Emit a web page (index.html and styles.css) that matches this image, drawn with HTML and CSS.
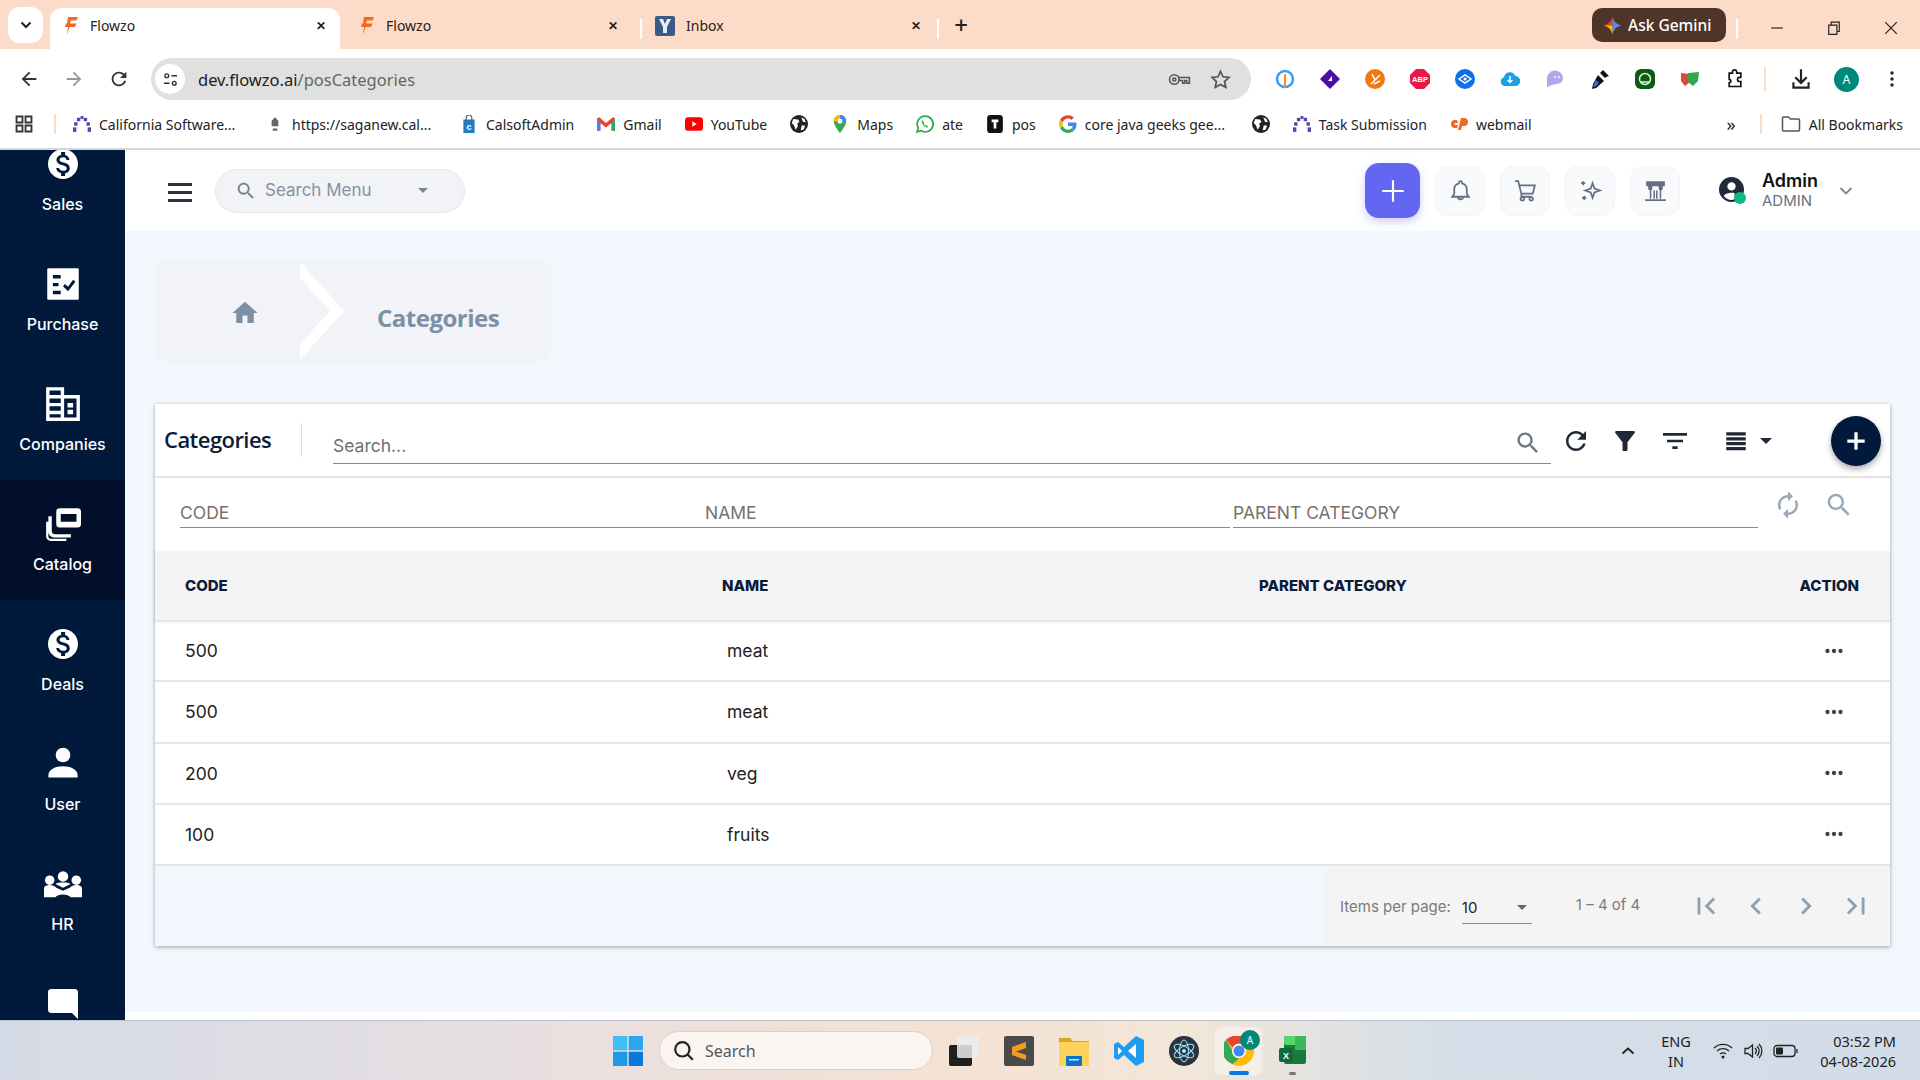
FILE: index.html
```html
<!DOCTYPE html>
<html>
<head>
    <meta charset="utf-8">
    <title>Flowzo</title>
    <link rel="stylesheet" href="styles.css">
</head>
<body>
    <svg class="sprite" width="0" height="0">
        <defs>
            <symbol id="i-search" viewBox="0 0 24 24"><path d="M15.5 14h-.79l-.28-.27C15.41 12.59 16 11.11 16 9.5 16 5.91 13.09 3 9.5 3S3 5.91 3 9.5 5.91 16 9.5 16c1.61 0 3.09-.59 4.23-1.57l.27.28v.79l5 4.99L20.49 19l-4.99-5zm-6 0C7.01 14 5 11.99 5 9.5S7.01 5 9.5 5 14 7.01 14 9.5 11.99 14 9.5 14z"/></symbol>
            <symbol id="i-home" viewBox="0 0 24 24"><path d="M10 20v-6h4v6h5v-8h3L12 3 2 12h3v8z"/></symbol>
            <symbol id="i-refresh" viewBox="0 0 24 24"><path d="M17.65 6.35C16.2 4.9 14.21 4 12 4c-4.42 0-7.99 3.58-7.99 8s3.57 8 7.99 8c3.73 0 6.84-2.55 7.73-6h-2.08c-.82 2.33-3.04 4-5.65 4-3.31 0-6-2.69-6-6s2.69-6 6-6c1.66 0 3.14.69 4.22 1.78L13 11h7V4l-2.35 2.35z"/></symbol>
            <symbol id="i-funnel" viewBox="0 0 24 24"><path d="M4.25 5.61C6.27 8.2 10 13 10 13v6c0 .55.45 1 1 1h2c.55 0 1-.45 1-1v-6s3.72-4.8 5.74-7.39C20.25 4.95 19.78 4 18.95 4H5.04c-.83 0-1.3.95-.79 1.61z"/></symbol>
            <symbol id="i-filter" viewBox="0 0 24 24"><path d="M10 18h4v-2h-4v2zM3 6v2h18V6H3zm3 7h12v-2H6v2z"/></symbol>
            <symbol id="i-rows" viewBox="0 0 24 24"><path d="M3 4h18v3H3zM3 8.5h18v3H3zM3 13h18v3H3zM3 17.5h18v3H3z"/></symbol>
            <symbol id="i-renew" viewBox="0 0 24 24"><path d="M12 6v3l4-4-4-4v3c-4.42 0-8 3.58-8 8 0 1.57.46 3.03 1.24 4.26L6.7 14.8c-.45-.83-.7-1.79-.7-2.8 0-3.31 2.69-6 6-6zm6.76 1.74L17.3 9.2c.44.84.7 1.79.7 2.8 0 3.31-2.69 6-6 6v-3l-4 4 4 4v-3c4.42 0 8-3.58 8-8 0-1.57-.46-3.03-1.24-4.26z"/></symbol>
            <symbol id="i-more" viewBox="0 0 24 24"><path d="M6 10a2 2 0 1 0 0 4 2 2 0 0 0 0-4zm12 0a2 2 0 1 0 0 4 2 2 0 0 0 0-4zm-6 0a2 2 0 1 0 0 4 2 2 0 0 0 0-4z"/></symbol>
            <symbol id="i-first" viewBox="0 0 24 24"><path d="M18.41 16.59L13.82 12l4.59-4.59L17 6l-6 6 6 6zM6 6h2v12H6z"/></symbol>
            <symbol id="i-prev" viewBox="0 0 24 24"><path d="M15.41 7.41L14 6l-6 6 6 6 1.41-1.41L10.83 12z"/></symbol>
            <symbol id="i-next" viewBox="0 0 24 24"><path d="M10 6L8.59 7.41 13.17 12l-4.58 4.59L10 18l6-6z"/></symbol>
            <symbol id="i-last" viewBox="0 0 24 24"><path d="M5.59 7.41L10.18 12l-4.59 4.59L7 18l6-6-6-6zM16 6h2v12h-2z"/></symbol>
            <symbol id="i-money" viewBox="0 0 24 24"><path d="M12 2C6.48 2 2 6.48 2 12s4.48 10 10 10 10-4.48 10-10S17.52 2 12 2zm1.41 16.09V20h-2.67v-1.93c-1.71-.36-3.16-1.46-3.27-3.4h1.96c.1 1.05.82 1.87 2.65 1.87 1.96 0 2.4-.98 2.4-1.59 0-.83-.44-1.61-2.67-2.14-2.48-.6-4.18-1.62-4.18-3.67 0-1.72 1.39-2.84 3.11-3.21V4h2.67v1.95c1.86.45 2.79 1.86 2.85 3.39H14.3c-.05-1.11-.64-1.87-2.22-1.87-1.5 0-2.4.68-2.4 1.64 0 .84.65 1.39 2.67 1.91s4.18 1.39 4.18 3.91c-.01 1.83-1.38 2.83-3.12 3.16z"/></symbol>
            <symbol id="i-globe" viewBox="0 0 16 16"><circle cx="8" cy="8" r="8" fill="#222"/><path fill="#fff" d="M3 3.5l4 .5 1.5 2-2 1.5L7 10 5 13 3.5 9 1.5 7zM10 2l3 1.5 1 3-2.500-.5zM10.500 9l3 .5-1.500 3.500-2.500.5z"/></symbol>
            <symbol id="i-arch" viewBox="0 0 16 16"><g fill="#5b3fa8"><rect x="0" y="11" width="3" height="4"/><rect x="1" y="6.5" width="3" height="3"/><rect x="3.5" y="2.5" width="3" height="3"/><rect x="9.5" y="2.5" width="3" height="3"/><rect x="12" y="6.5" width="3" height="3"/><rect x="13" y="11" width="3" height="4"/><rect x="6.7" y="1" width="2.6" height="2.5"/></g></symbol>
            <symbol id="i-flowzo" viewBox="0 0 14 18"><path fill="#f26a21" d="M3 0h10l-1.5 3.5H6L5 6.5h6.5L10 10H4.500L2 18 3 10H0l1-3.500h1z"/></symbol>
        </defs>
    </svg>

    <div class="tab-strip">
        <div class="tab-list-btn"><svg class="chev-down" viewBox="0 0 12 8"><path d="M1.5 1.5L6 6l4.5-4.5"/></svg></div>
        <div class="tab tab-active">
            <svg class="tab-fav"><use href="#i-flowzo"/></svg>
            <span class="tab-title">Flowzo</span>
            <span class="tab-close">✕</span>
        </div>
        <div class="tab">
            <svg class="tab-fav"><use href="#i-flowzo"/></svg>
            <span class="tab-title">Flowzo</span>
            <span class="tab-close">✕</span>
        </div>
        <i class="tab-sep"></i>
        <div class="tab">
            <svg class="tab-fav-y" viewBox="0 0 20 20"><rect width="20" height="20" rx="2" fill="#3a5a88"/><path d="M4 3h4l2 5 2-5h4l-4 8v6H8v-6z" fill="#e8eef6"/></svg>
            <span class="tab-title">Inbox</span>
            <span class="tab-close">✕</span>
        </div>
        <i class="tab-sep"></i>
        <span class="tab-new">+</span>
        <div class="gemini">
            <svg class="gemini-star" viewBox="0 0 20 20"><path fill="#4c8df6" d="M10 0c.6 5 4 9 10 10-5 .7-9 4-10 10z"/><path fill="#ea4335" d="M10 0C9.4 5 6 9 0 10l10 0z"/><path fill="#fbbc04" d="M0 10c5 .7 9 4 10 10V10z"/></svg>
            <span>Ask Gemini</span>
        </div>
        <i class="tab-sep gemini-sep"></i>
        <div class="win-controls">
            <svg viewBox="0 0 12 12"><path d="M1 6h10"/></svg>
            <svg viewBox="0 0 12 12"><path d="M1.5 3.5h7v8h-7zM3.5 3.5V1h7v8H8.5"/></svg>
            <svg viewBox="0 0 12 12"><path d="M1 1l10 10M11 1L1 11"/></svg>
        </div>
    </div>

    <div class="toolbar">
        <svg class="nav-icon" viewBox="0 0 24 24"><path d="M20 11H7.83l5.59-5.59L12 4l-8 8 8 8 1.41-1.41L7.83 13H20z"/></svg>
        <svg class="nav-icon nav-off" viewBox="0 0 24 24"><path d="M12 4l-1.41 1.41L16.17 11H4v2h12.17l-5.58 5.59L12 20l8-8z"/></svg>
        <svg class="nav-icon" viewBox="0 0 24 24"><path d="M17.65 6.35C16.2 4.9 14.21 4 12 4c-4.42 0-7.99 3.58-7.99 8s3.57 8 7.99 8c3.73 0 6.84-2.55 7.73-6h-2.08c-.82 2.33-3.04 4-5.65 4-3.31 0-6-2.69-6-6s2.69-6 6-6c1.66 0 3.14.69 4.22 1.78L13 11h7V4l-2.35 2.35z"/></svg>
        <div class="omnibox">
            <span class="site-info"><svg viewBox="0 0 16 16"><circle cx="4" cy="4" r="2"/><path d="M9 4h6M1 12h6"/><circle cx="12" cy="12" r="2"/></svg></span>
            <span class="url">dev.flowzo.ai<span class="url-path">/posCategories</span></span>
            <svg class="omni-key" viewBox="0 0 22 14"><circle cx="6" cy="7" r="4.5"/><circle cx="6" cy="7" r="1.5"/><path d="M10.5 5h10v5.500h-2.500V8h-2v2.500h-2V8h-3.500"/></svg>
            <svg class="omni-star" viewBox="0 0 24 24"><path d="M12 3.5l2.6 5.7 6.2.7-4.600 4.200 1.300 6.100L12 17.100l-5.500 3.100 1.300-6.100-4.600-4.200 6.200-.7z"/></svg>
        </div>
        <div class="extensions">
            <svg viewBox="0 0 20 20"><circle cx="10" cy="10" r="8" fill="none" stroke="#3b9cf0" stroke-width="2.5"/><path d="M10 5v14" stroke="#f28b3c" stroke-width="2"/></svg>
            <svg viewBox="0 0 20 20"><path d="M10 0l10 10-10 10L0 10z" fill="#4a0fa8"/><path d="M8 12l4-5v5z" fill="#fff"/></svg>
            <svg viewBox="0 0 20 20"><circle cx="10" cy="10" r="10" fill="#f07a10"/><path d="M6 15L15 6M9 15l6-3M7 5l3 6" stroke="#fff" stroke-width="1.5"/></svg>
            <svg viewBox="0 0 20 20"><path d="M6 0h8l6 6v8l-6 6H6l-6-6V6z" fill="#e8194a"/><text x="10" y="13" class="abp">ABP</text></svg>
            <svg viewBox="0 0 20 20"><circle cx="10" cy="10" r="10" fill="#0f6fe8"/><path d="M4 10l6-4 6 4-6 4z" fill="none" stroke="#fff" stroke-width="1.5"/><circle cx="10" cy="10" r="1.5" fill="#fff"/></svg>
            <svg viewBox="0 0 20 20"><path d="M5 17a4.500 4.500 0 0 1-1-8.800A6 6 0 0 1 15.500 7 5 5 0 0 1 15 17z" fill="#1aa0e8"/><path d="M10 7v6M7.500 11l2.500 2.500 2.500-2.500" stroke="#fff" stroke-width="1.5" fill="none"/></svg>
            <svg viewBox="0 0 20 20"><path d="M2 18V10a8 8 0 0 1 16-1c0 5-4 6-7 6l-4 1z" fill="#b3a6ee"/><circle cx="10" cy="8" r="1" fill="#fff"/><circle cx="14" cy="8" r="1" fill="#fff"/></svg>
            <svg viewBox="0 0 20 20"><path d="M13 1l6 6-3 1-1 1-5-5 1-1zM8 6l6 6-8 7-4 1 1-5z" fill="#111"/><path d="M6 11l3 3-4 4-2-1z" fill="#3a6fd8"/></svg>
            <svg viewBox="0 0 20 20"><rect width="20" height="20" rx="6" fill="#0c5a14"/><circle cx="10" cy="10" r="5.5" fill="none" stroke="#dff2d0" stroke-width="1.5"/><path d="M6 13h8" stroke="#dff2d0" stroke-width="1.5"/></svg>
            <svg viewBox="0 0 20 20"><path d="M1 4l9 1v8l-5 4-4-5z" fill="#d84a3a"/><path d="M8 4l11-1-1 9-5 5-5-4z" fill="#2eaa4a"/></svg>
            <svg viewBox="0 0 24 24"><path class="ext-puzzle" d="M5 5h4V3.500a2.500 2.500 0 0 1 5 0V5h5v5h-1.500a2.500 2.500 0 0 0 0 5H19v6H5v-4.500a2 2 0 0 0 0-4z"/></svg>
            <i class="toolbar-sep"></i>
            <svg class="ext-dl" viewBox="0 0 24 24"><path d="M11 3h2v10.200l3.600-3.600L18 11l-6 6-6-6 1.400-1.400 3.600 3.600zM4 15h2v4h12v-4h2v6H4z"/></svg>
            <span class="avatar">A</span>
            <svg class="ext-dots" viewBox="0 0 20 20"><circle cx="10" cy="4" r="1.7"/><circle cx="10" cy="10" r="1.7"/><circle cx="10" cy="16" r="1.7"/></svg>
        </div>
    </div>

    <div class="bookmarks">
        <svg class="bm-apps" viewBox="0 0 18 18"><path d="M1.5 1.5h6v6h-6zM10.500 1.500h6v6h-6zM1.500 10.500h6v6h-6zM10.500 10.500h6v6h-6z"/></svg>
        <i class="bm-sep"></i>
        <span class="bm bm-wide-a"><svg><use href="#i-arch"/></svg>California Software...</span>
        <span class="bm bm-wide-b"><svg viewBox="0 0 16 16"><path d="M8 2l3 3v5H5V5zM6 12h4v2H6z" fill="#666"/></svg>https://saganew.cal...</span>
        <span class="bm"><svg viewBox="0 0 16 16"><path d="M3 4h10v12H3z" fill="#1f7fc4"/><path d="M5.500 5V2.500a2.500 2.500 0 0 1 5 0V5" fill="none" stroke="#555"/><text x="8" y="13" class="bag">c</text></svg>CalsoftAdmin</span>
        <span class="bm"><svg viewBox="0 0 16 16"><path d="M0 3l2-1 6 5 6-5 2 1v11h-3V7L8 11 3 7v7H0z" fill="#ea4335"/><path d="M0 3v11h3V7z" fill="#4285f4"/><path d="M16 3v11h-3V7z" fill="#34a853"/></svg>Gmail</span>
        <span class="bm"><svg viewBox="0 0 16 16"><rect x="0" y="2" width="16" height="12" rx="3" fill="#f00"/><path d="M6.500 5.500l4 2.500-4 2.500z" fill="#fff"/></svg>YouTube</span>
        <span class="bm"><svg><use href="#i-globe"/></svg></span>
        <span class="bm"><svg viewBox="0 0 16 16"><path d="M8 0a5.500 5.500 0 0 1 5.500 5.500C13.500 9.500 8 16 8 16S2.500 9.500 2.500 5.500A5.500 5.500 0 0 1 8 0z" fill="#34a853"/><path d="M8 0a5.500 5.500 0 0 1 5.500 5.500L8 5.500z" fill="#4285f4"/><path d="M2.500 5.500A5.500 5.500 0 0 1 8 0v5.500z" fill="#fbbc04"/><circle cx="8" cy="5.500" r="2.200" fill="#fff"/></svg>Maps</span>
        <span class="bm"><svg viewBox="0 0 16 16"><path d="M8 1a7 7 0 0 0-6 10.500L1 15l3.600-1A7 7 0 1 0 8 1z" fill="#fff" stroke="#25b04b" stroke-width="1.600"/><path d="M5.500 4.500c-1 1.500 0 3.500 1.500 5s3 2 4 1.200l-1.500-1.700-1 .5L6.800 7.800l.5-1z" fill="#25b04b"/></svg>ate</span>
        <span class="bm"><svg viewBox="0 0 16 16"><rect x="1" y="0" width="14" height="16" rx="3" fill="#111"/><path d="M5 4h6v2.500H9.200V12H6.800V6.500H5z" fill="#fff"/></svg>pos</span>
        <span class="bm bm-wide-c"><svg viewBox="0 0 16 16"><path d="M15.500 8.200c0-.6 0-1-.1-1.500H8v3h4.300c-.2 1-.7 1.800-1.600 2.400l2.500 1.900c1.500-1.300 2.300-3.300 2.300-5.800z" fill="#4285f4"/><path d="M8 16c2.100 0 3.900-.7 5.200-1.900l-2.500-1.900c-.7.500-1.600.8-2.700.8-2.100 0-3.800-1.400-4.500-3.300L.9 11.600C2.200 14.200 4.900 16 8 16z" fill="#34a853"/><path d="M3.500 9.700A4.800 4.800 0 0 1 3.500 6.300L.9 4.400a8 8 0 0 0 0 7.200z" fill="#fbbc04"/><path d="M8 3.200c1.200 0 2.200.4 3 1.200l2.200-2.200A8 8 0 0 0 .9 4.400l2.600 1.900C4.200 4.500 5.900 3.200 8 3.200z" fill="#ea4335"/></svg>core java geeks gee...</span>
        <span class="bm"><svg><use href="#i-globe"/></svg></span>
        <span class="bm"><svg><use href="#i-arch"/></svg>Task Submission</span>
        <span class="bm"><svg viewBox="0 0 18 16"><path d="M7 4H5a4 4 0 0 0 0 8h2l1-3H5.500a1 1 0 0 1 0-2H8zM9 2h5a3.500 3.500 0 0 1 0 8h-2l-1 4H8l3-12z" fill="#f26a21"/></svg>webmail</span>
        <span class="bm-more">»</span>
        <i class="bm-sep bm-sep-end"></i>
        <span class="bm bm-all"><svg viewBox="0 0 20 18"><path d="M1.500 3a1 1 0 0 1 1-1h5l2 2h8a1 1 0 0 1 1 1v10a1 1 0 0 1-1 1h-15a1 1 0 0 1-1-1z"/></svg>All Bookmarks</span>
    </div>

    <div class="app">
        <aside class="sidebar">
            <nav class="side-list">
                <a class="side-item">
                    <svg class="side-icon" viewBox="0 0 24 24"><use href="#i-money"/></svg>
                    <span>Sales</span>
                </a>
                <a class="side-item">
                    <svg class="side-icon" viewBox="0 0 32 32"><path fill-rule="evenodd" d="M3 2h26a1 1 0 0 1 1 1v26a1 1 0 0 1-1 1H3a1 1 0 0 1-1-1V3a1 1 0 0 1 1-1zm4 6v3h7V8zm0 7v3h5v-3zm0 7v3h7v-3zm9-4l4.500 4.500L27 14l-2-1.800-4.500 6.300-2.800-2.500z"/></svg>
                    <span>Purchase</span>
                </a>
                <a class="side-item">
                    <svg class="side-icon" viewBox="0 0 32 32"><path fill-rule="evenodd" d="M1 1h16v7h14v23H1zm3 3v4h10V4zm0 7v4h10v-4zm0 7v4h10v-4zm0 7v3h10v-3zM17 11v17h11V11zm3 4h5v4h-5zm0 6h5v4h-5z"/></svg>
                    <span>Companies</span>
                </a>
                <a class="side-item side-item-active">
                    <svg class="side-icon" viewBox="0 0 32 32"><path fill-rule="evenodd" d="M13 2h16a3 3 0 0 1 3 3v11a3 3 0 0 1-3 3H13a3 3 0 0 1-3-3V5a3 3 0 0 1 3-3zm1 5v7h14V7zM6 9v13a3 3 0 0 0 3 3h14v3H8a5 5 0 0 1-5-5V9zM1 14v13a4 4 0 0 0 4 4h14v-2H5a2 2 0 0 1-2-2V14z"/></svg>
                    <span>Catalog</span>
                </a>
                <a class="side-item">
                    <svg class="side-icon" viewBox="0 0 24 24"><use href="#i-money"/></svg>
                    <span>Deals</span>
                </a>
                <a class="side-item">
                    <svg class="side-icon" viewBox="0 0 32 32"><circle cx="16" cy="8" r="6.500"/><path d="M3 28v-2c0-5 6-8 13-8s13 3 13 8v2z"/></svg>
                    <span>User</span>
                </a>
                <a class="side-item">
                    <svg class="side-icon side-icon-hr" viewBox="0 0 40 28"><circle cx="20" cy="6" r="5.500"/><circle cx="6" cy="10" r="5"/><circle cx="34" cy="10" r="5"/><path d="M0 28V19c0-3 3-4 6-4 3 0 5 1 7 3l7 3 7-3c2-2 4-3 7-3 3 0 6 1 6 4v9H28c-3-4-13-4-16 0z"/><path d="M12 14c3-2 13-2 16 0l-8 4z"/></svg>
                    <span>HR</span>
                </a>
                <a class="side-item">
                    <svg class="side-icon" viewBox="0 0 24 24"><path d="M21.99 4c0-1.1-.89-2-1.99-2H4c-1.1 0-2 .9-2 2v12c0 1.100.9 2 2 2h14l4 4-.01-18z"/></svg>
                </a>
            </nav>
        </aside>

        <div class="main">
            <header class="topbar">
                <div class="hamburger"><i></i><i></i><i></i></div>
                <div class="menu-search">
                    <svg class="ms-icon"><use href="#i-search"/></svg>
                    <span class="ms-text">Search Menu</span>
                    <i class="caret ms-caret"></i>
                </div>
                <div class="topbar-right">
                    <div class="add-btn"><svg viewBox="0 0 24 24"><path d="M11 2h2v9h9v2h-9v9h-2v-9H2v-2h9z"/></svg></div>
                    <div class="tb-btn"><svg viewBox="0 0 24 24"><path d="M12 3a1.500 1.500 0 0 1 1.500 1.500v.6A6 6 0 0 1 18 11v4l2 3H4l2-3v-4a6 6 0 0 1 4.500-5.900v-.6A1.500 1.500 0 0 1 12 3zM9.500 18a2.500 2.500 0 0 0 5 0"/></svg></div>
                    <div class="tb-btn"><svg viewBox="0 0 24 24"><path d="M2 3h3l3 12h11l2-8H6M8 15v2a1 1 0 0 0 1 1h9"/><circle cx="9" cy="20" r="1.7"/><circle cx="17.500" cy="20" r="1.7"/></svg></div>
                    <div class="tb-btn"><svg viewBox="0 0 24 24"><path d="M14 5l1.800 5.200L21 12l-5.200 1.800L14 19l-1.800-5.200L7 12l5.200-1.800zM5 3v4M3 5h4M6 17v4M4 19h4"/></svg></div>
                    <div class="tb-btn"><svg class="tb-bank" viewBox="0 0 24 24"><path d="M3 3h18v5H3zM5 8v2a2 2 0 0 0 4 0V8zM15 8v2a2 2 0 0 0 4 0V8zM10 12h1.500v8H10zM6.500 12H8v8H6.500zM12.500 12H14v8h-1.500zM16 12h1.500v8H16zM2 20.500h20V22H2z"/></svg></div>
                    <div class="user-box">
                        <div class="user-pic">
                            <svg viewBox="0 0 24 24"><path d="M12 0a12 12 0 1 0 0 24 12 12 0 0 0 0-24zm0 5a4 4 0 1 1 0 8 4 4 0 0 1 0-8zm0 17c-3 0-6-1.500-7.500-4 1-2 5-3 7.500-3 1 0 2 .1 3 .4V21c-1 .7-2 1-3 1z"/></svg>
                            <i class="user-dot"></i>
                        </div>
                        <div class="user-text">
                            <div class="user-name">Admin</div>
                            <div class="user-role">ADMIN</div>
                        </div>
                        <svg class="user-chev" viewBox="0 0 14 10"><path d="M1.500 2l5.500 5.500L12.500 2"/></svg>
                    </div>
                </div>
            </header>

            <div class="content">
                <div class="crumbs">
                    <div class="crumb-home"><svg><use href="#i-home"/></svg></div>
                    <svg class="crumb-arrow" viewBox="0 0 50 102"><path d="M0 2l44 49L0 100V84l30-33L0 18z"/></svg>
                    <div class="crumb-title">Categories</div>
                </div>

                <section class="card">
                    <div class="card-head">
                        <h2 class="card-title">Categories</h2>
                        <div class="card-search">
                            <span class="cs-text">Search...</span>
                            <svg class="cs-icon"><use href="#i-search"/></svg>
                        </div>
                        <div class="card-tools">
                            <svg class="tool-refresh"><use href="#i-refresh"/></svg>
                            <svg class="tool-funnel"><use href="#i-funnel"/></svg>
                            <svg class="tool-filter"><use href="#i-filter"/></svg>
                            <svg class="tool-rows"><use href="#i-rows"/></svg>
                            <i class="caret tool-caret"></i>
                        </div>
                        <div class="fab"><svg viewBox="0 0 24 24"><path d="M10.500 4h3v6.500H20v3h-6.500V20h-3v-6.500H4v-3h6.500z"/></svg></div>
                    </div>

                    <div class="filter-row">
                        <div class="filter-field">CODE</div>
                        <div class="filter-field">NAME</div>
                        <div class="filter-field">PARENT CATEGORY</div>
                        <div class="filter-actions">
                            <svg><use href="#i-renew"/></svg>
                            <svg><use href="#i-search"/></svg>
                        </div>
                    </div>

                    <div class="t-head t-grid">
                        <div>CODE</div>
                        <div>NAME</div>
                        <div>PARENT CATEGORY</div>
                        <div class="t-action">ACTION</div>
                    </div>
                    <div class="t-row t-grid">
                        <div>500</div><div class="t-name">meat</div><div></div>
                        <div class="t-action"><svg class="t-more"><use href="#i-more"/></svg></div>
                    </div>
                    <div class="t-row t-grid">
                        <div>500</div><div class="t-name">meat</div><div></div>
                        <div class="t-action"><svg class="t-more"><use href="#i-more"/></svg></div>
                    </div>
                    <div class="t-row t-grid">
                        <div>200</div><div class="t-name">veg</div><div></div>
                        <div class="t-action"><svg class="t-more"><use href="#i-more"/></svg></div>
                    </div>
                    <div class="t-row t-grid">
                        <div>100</div><div class="t-name">fruits</div><div></div>
                        <div class="t-action"><svg class="t-more"><use href="#i-more"/></svg></div>
                    </div>

                    <div class="card-foot">
                        <div class="pager">
                            <span class="pg-label">Items per page:</span>
                            <div class="pg-select"><span>10</span><i class="caret pg-caret"></i></div>
                            <span class="pg-range">1 – 4 of 4</span>
                            <div class="pg-btns">
                                <svg><use href="#i-first"/></svg>
                                <svg><use href="#i-prev"/></svg>
                                <svg><use href="#i-next"/></svg>
                                <svg><use href="#i-last"/></svg>
                            </div>
                        </div>
                    </div>
                </section>
            </div>
            <div class="main-strip"></div>
        </div>
    </div>

    <footer class="taskbar">
        <svg class="tk-win" viewBox="0 0 30 30"><rect width="14.300" height="14.300" x="0" y="0" fill="#3fc0f5"/><rect width="14.300" height="14.300" x="15.700" y="0" fill="#2aa8ee"/><rect width="14.300" height="14.300" x="0" y="15.700" fill="#1b9ae8"/><rect width="14.300" height="14.300" x="15.700" y="15.700" fill="#0a78d8"/></svg>
        <div class="tk-search">
            <svg viewBox="0 0 20 20"><circle cx="8.500" cy="8.500" r="6.500"/><path d="M13 13l5 5"/></svg>
            <span>Search</span>
        </div>
        <svg class="tk-app" viewBox="0 0 30 30"><rect x="0" y="9" width="23" height="21" rx="2" fill="#1f1f1f"/><rect x="8" y="0" width="22" height="22" rx="2" fill="#ececec" opacity=".85"/></svg>
        <svg class="tk-app" viewBox="0 0 30 30"><rect width="30" height="30" rx="2" fill="#4a4a4a"/><path d="M8 11l14-5v6L8 17zM8 14l14 5v5L8 19z" fill="#f79b1f"/></svg>
        <svg class="tk-app" viewBox="0 0 30 30"><path d="M0 2h11l3 3h16v25H0z" fill="#e0a31c"/><rect y="6" width="30" height="24" fill="#fbd35a"/><rect x="7" y="20" width="16" height="10" rx="1" fill="#0c74c8"/><rect x="10" y="23" width="10" height="1.500" fill="#bfe2ff"/></svg>
        <svg class="tk-app" viewBox="0 0 30 30"><path d="M22 0l8 4v22l-8 4-12-11-6 5-4-2V8l4-2 6 5z" fill="#1f9cf0"/><path d="M22 8l-8 7 8 7z" fill="#fff"/><path d="M4 11v8l4-4z" fill="#fff"/></svg>
        <svg class="tk-app" viewBox="0 0 30 30"><circle cx="15" cy="15" r="15" fill="#2b3240"/><g fill="none" stroke="#9feaf9" stroke-width="1"><ellipse cx="15" cy="15" rx="11" ry="4.500" transform="rotate(30 15 15)"/><ellipse cx="15" cy="15" rx="11" ry="4.500" transform="rotate(90 15 15)"/><ellipse cx="15" cy="15" rx="11" ry="4.500" transform="rotate(150 15 15)"/></g><circle cx="15" cy="15" r="2" fill="#9feaf9"/></svg>
        <div class="tk-chrome">
            <svg viewBox="0 0 30 30"><circle cx="15" cy="15" r="15" fill="#fbbc04"/><path d="M15 0a15 15 0 0 1 13 7.500H15a7.500 7.500 0 0 0-6.500 3.750L2 3.800A15 15 0 0 1 15 0z" fill="#ea4335"/><path d="M2 3.800l6.500 11.200A7.500 7.500 0 0 0 15 22.500L8.500 28A15 15 0 0 1 2 3.800z" fill="#34a853"/><circle cx="15" cy="15" r="7" fill="#fff"/><circle cx="15" cy="15" r="5.500" fill="#4285f4"/></svg>
            <span class="tk-badge">A</span>
            <i class="tk-active"></i>
        </div>
        <div class="tk-excel">
            <svg viewBox="0 0 27 30"><rect x="5" y="0" width="22" height="28" rx="2" fill="#1a7a3e"/><rect x="5" y="0" width="22" height="9" rx="2" fill="#55d668"/><rect x="16" y="0" width="11" height="14" rx="1" fill="#3bb85a"/><rect x="0" y="12" width="14" height="14" rx="2" fill="#0f6b3a"/><text x="7" y="23" class="xl">X</text></svg>
            <i class="tk-open"></i>
        </div>
        <div class="tray">
            <svg class="tray-up" viewBox="0 0 14 8"><path d="M1.500 6.500L7 1.500l5.500 5"/></svg>
            <div class="tray-lang"><div>ENG</div><div>IN</div></div>
            <svg class="tray-icon" viewBox="0 0 20 18"><path class="tray-line" d="M1 6a13 13 0 0 1 18 0M4 9a9 9 0 0 1 12 0M7 12a5 5 0 0 1 6 0"/><circle cx="10" cy="15" r="1.500"/></svg>
            <svg class="tray-icon" viewBox="0 0 20 18"><path class="tray-line" d="M2 6.500h3L9.500 3v12L5 11.500H2zM12 6a4 4 0 0 1 0 6M14 4a7 7 0 0 1 0 10M16 2a10 10 0 0 1 0 14"/></svg>
            <svg class="tray-batt" viewBox="0 0 26 14"><rect x="1" y="1.500" width="21" height="11" rx="3" class="tray-line"/><rect x="3" y="3.500" width="7" height="7" rx="1"/><path d="M24 5v4" class="tray-line"/></svg>
            <div class="tray-clock"><div>03:52 PM</div><div>04-08-2026</div></div>
        </div>
    </footer>
</body>
</html>
```

FILE: styles.css
```css
* {
    box-sizing: border-box;
}
body {
    margin: 0;
    width: 1920px;
    height: 1080px;
    overflow: hidden;
    display: flex;
    flex-direction: column;
    font-family: "Inter", "Liberation Sans", sans-serif;
    background: #fff;
    color: #111;
}
.sprite {
    display: block;
    height: 0;
}
i {
    display: block;
}
.caret {
    width: 0;
    height: 0;
    border-left: 5px solid transparent;
    border-right: 5px solid transparent;
    border-top: 5px solid #757575;
}

/* browser tabs */
.tab-strip {
    height: 49px;
    flex: none;
    display: flex;
    align-items: flex-end;
    background: #fddbc9;
    padding-left: 8px;
    font-family: "Noto Sans", sans-serif;
}
.tab-list-btn {
    width: 35px;
    height: 36px;
    margin-bottom: 6px;
    margin-right: 7px;
    border-radius: 12px;
    background: #fff;
    display: flex;
    align-items: center;
    justify-content: center;
}
.chev-down {
    width: 12px;
    height: 8px;
    fill: none;
    stroke: #222;
    stroke-width: 2;
}
.tab {
    width: 290px;
    height: 41px;
    display: flex;
    align-items: center;
    padding: 0 14px 6px 15px;
    font-size: 14px;
    color: #2b2118;
}
.tab-active {
    background: #fff;
    border-radius: 12px 12px 0 0;
}
.tab-active + .tab {
    width: 300px;
    padding-left: 21px;
    padding-right: 22px;
}
.tab-fav {
    width: 14px;
    height: 18px;
    flex: none;
    margin-right: 11px;
}
.tab-fav-y {
    width: 20px;
    height: 20px;
    flex: none;
    margin-right: 11px;
}
.tab-title {
    flex: 1;
}
.tab-close {
    font-size: 12px;
    font-weight: 700;
    color: #222;
}
.tab-sep {
    width: 2px;
    height: 20px;
    margin-bottom: 10px;
    background: #fff;
}
.tab-sep + .tab {
    width: 295px;
    padding-left: 13px;
    padding-right: 16px;
}
.tab-new {
    width: 44px;
    height: 41px;
    text-align: center;
    font-size: 24px;
    line-height: 34px;
    font-weight: 500;
    color: #222;
}
.gemini {
    margin-left: 609px;
    margin-bottom: 7px;
    width: 134px;
    height: 34px;
    border-radius: 10px;
    background: #4f3527;
    color: #fff;
    display: flex;
    align-items: center;
    padding-left: 11px;
    font-size: 15.5px;
    font-weight: 500;
    white-space: nowrap;
}
.gemini-star {
    width: 19px;
    height: 19px;
    margin-right: 6px;
    flex: none;
}
.gemini-sep {
    margin-left: 10px;
}
.win-controls {
    margin-left: 32px;
    margin-bottom: 14px;
    display: flex;
    gap: 43px;
}
.win-controls svg {
    width: 14px;
    height: 14px;
    fill: none;
    stroke: #222;
    stroke-width: 1;
}

/* browser toolbar */
.toolbar {
    height: 51px;
    flex: none;
    display: flex;
    align-items: center;
    padding: 9px 0 0 18px;
}
.nav-icon {
    width: 22px;
    height: 22px;
    margin-right: 23px;
    flex: none;
    fill: #333;
}
.nav-off {
    fill: #9a9a9a;
}
.omnibox {
    width: 1100px;
    height: 42px;
    margin-left: -2px;
    border-radius: 21px;
    background: #e0e0e0;
    display: flex;
    align-items: center;
    padding: 0 19px 0 4px;
}
.site-info {
    width: 30px;
    height: 30px;
    border-radius: 50%;
    background: #fff;
    display: flex;
    align-items: center;
    justify-content: center;
}
.site-info svg {
    width: 15px;
    height: 15px;
    fill: none;
    stroke: #333;
    stroke-width: 1.5;
}
.url {
    flex: 1;
    margin-left: 13px;
    font-family: "Noto Sans", sans-serif;
    font-size: 16.5px;
    color: #222;
}
.url-path {
    color: #666;
}
.omni-key {
    width: 23px;
    height: 15px;
    fill: none;
    stroke: #555;
    stroke-width: 1.5;
    margin-right: 18px;
}
.omni-star {
    width: 23px;
    height: 23px;
    fill: none;
    stroke: #555;
    stroke-width: 1.8;
}
.extensions {
    display: flex;
    align-items: center;
    margin-left: 24px;
    gap: 25px;
}
.extensions svg {
    width: 20px;
    height: 20px;
    flex: none;
}
.abp {
    font: 700 7.5px "Liberation Sans", sans-serif;
    fill: #fff;
    text-anchor: middle;
}
.bag {
    font: 700 8px "Liberation Sans", sans-serif;
    fill: #fff;
    text-anchor: middle;
}
.ext-puzzle {
    fill: none;
    stroke: #111;
    stroke-width: 2;
}
.toolbar-sep {
    width: 2px;
    height: 24px;
    background: #fddbc9;
    margin: 0 -6px;
}
.extensions .ext-dl {
    width: 26px;
    height: 26px;
    fill: #222;
    margin-left: 3px;
}
.avatar {
    width: 25px;
    height: 25px;
    margin-left: -5px;
    border-radius: 50%;
    background: #00897b;
    color: #fff;
    font-size: 12px;
    display: flex;
    align-items: center;
    justify-content: center;
    flex: none;
}
.extensions .ext-dots {
    margin-left: -2px;
    fill: #222;
}

/* bookmarks */
.bookmarks {
    height: 50px;
    flex: none;
    display: flex;
    align-items: center;
    padding-left: 15px;
    border-bottom: 2px solid #d6d6d6;
    font-family: "Noto Sans", sans-serif;
    font-size: 14px;
    color: #222;
    white-space: nowrap;
    gap: 23px;
}
.bm-apps {
    width: 18px;
    height: 18px;
    fill: none;
    stroke: #333;
    stroke-width: 1.8;
    flex: none;
}
.bm-sep {
    width: 2px;
    height: 20px;
    background: #fddbc9;
    margin: 0 -6px 0 -2px;
}
.bm {
    display: flex;
    align-items: center;
    gap: 8px;
}
.bm svg {
    width: 18px;
    height: 18px;
    flex: none;
}
.bm-wide-a {
    width: 170px;
}
.bm-wide-b {
    width: 171px;
}
.bm-wide-c {
    width: 170px;
}
.bm-more {
    margin-left: 172px;
    font-size: 18px;
    line-height: 18px;
}
.bm-sep-end {
    margin: 0 -4px 0 1px;
}
.bm-all svg {
    width: 20px;
    height: 18px;
    fill: none;
    stroke: #555;
    stroke-width: 1.5;
}

/* app frame */
.app {
    flex: 1;
    min-height: 0;
    display: flex;
}
.sidebar {
    width: 125px;
    flex: none;
    overflow: hidden;
    background: #01193a;
    color: #fff;
}
.side-list {
    margin-top: -30px;
}
.side-item {
    height: 120px;
    display: flex;
    flex-direction: column;
    align-items: center;
    padding-top: 26px;
    font-size: 16px;
    font-weight: 500;
}
.side-item-active {
    background: #010f2a;
}
.side-icon {
    width: 36px;
    height: 36px;
    margin-bottom: 12px;
    fill: #fff;
}
.side-icon-hr {
    width: 38px;
}

.main {
    flex: 1;
    min-width: 0;
    display: flex;
    flex-direction: column;
    background: #fff;
}
.topbar {
    height: 81px;
    flex: none;
    display: flex;
    align-items: center;
    padding-left: 43px;
}
.hamburger {
    width: 24px;
    margin-top: 3px;
    display: flex;
    flex-direction: column;
    gap: 5px;
}
.hamburger i {
    height: 3px;
    background: #2b3240;
}
.menu-search {
    width: 250px;
    height: 44px;
    margin-left: 23px;
    border-radius: 22px;
    border: 1px solid #e6e9f0;
    background: #f1f3f7;
    display: flex;
    align-items: center;
    padding-left: 19px;
}
.ms-icon {
    width: 22px;
    height: 22px;
    fill: #77818f;
    flex: none;
}
.ms-text {
    margin-left: 8px;
    margin-bottom: 2px;
    font-size: 17px;
    color: #8690a0;
    width: 153px;
    flex: none;
}
.ms-caret {
    border-top-color: #7b8798;
}
.topbar-right {
    margin-left: auto;
    display: flex;
    align-items: center;
    gap: 15px;
    padding-right: 67px;
}
.add-btn {
    width: 55px;
    height: 55px;
    border-radius: 14px;
    background: #6366f1;
    box-shadow: 0 4px 10px rgba(99, 102, 241, 0.3);
    display: flex;
    align-items: center;
    justify-content: center;
}
.add-btn svg {
    width: 26px;
    height: 26px;
    fill: #fff;
}
.tb-btn {
    width: 50px;
    height: 50px;
    border-radius: 13px;
    background: #f8fafc;
    border: 1px solid #f1f5f9;
    display: flex;
    align-items: center;
    justify-content: center;
}
.tb-btn svg {
    width: 25px;
    height: 25px;
    fill: none;
    stroke: #667085;
    stroke-width: 1.7;
}
.tb-btn .tb-bank {
    fill: #667085;
    stroke: none;
}
.user-box {
    display: flex;
    align-items: center;
    margin-left: 24px;
}
.user-pic {
    width: 27px;
    height: 27px;
    position: relative;
}
.user-pic svg {
    width: 25px;
    height: 25px;
    fill: #1f2937;
    display: block;
}
.user-dot {
    position: absolute;
    right: 0;
    bottom: 0;
    width: 12px;
    height: 12px;
    border-radius: 50%;
    background: #10b981;
}
.user-text {
    margin-left: 16px;
    width: 77px;
}
.user-name {
    font-size: 18px;
    font-weight: 600;
    line-height: 21px;
    color: #111;
}
.user-role {
    font-size: 15px;
    line-height: 20px;
    color: #6b7280;
}
.user-chev {
    width: 14px;
    height: 10px;
    fill: none;
    stroke: #7b8798;
    stroke-width: 1.8;
}

/* page content */
.content {
    flex: 1;
    min-height: 0;
    background: #f2f6fd;
    padding: 29px 30px 0;
}
.main-strip {
    height: 8px;
    flex: none;
}
.crumbs {
    width: 397px;
    height: 102px;
    border-radius: 14px;
    background: #f1f3f8;
    display: flex;
    align-items: center;
}
.crumb-home {
    width: 145px;
    padding-left: 75px;
    padding-top: 4px;
}
.crumb-home svg {
    width: 30px;
    height: 30px;
    fill: #7b8fa6;
    display: block;
}
.crumb-arrow {
    width: 50px;
    height: 102px;
    fill: #fff;
    flex: none;
}
.crumb-title {
    margin-left: 27px;
    margin-top: 12px;
    font-family: "Open Sans", sans-serif;
    font-size: 24px;
    font-weight: 700;
    letter-spacing: -0.5px;
    color: #7b8fa6;
}

.card {
    margin-top: 42px;
    width: 1735px;
    height: 542px;
    background: #fff;
    box-shadow: 0 1px 4px rgba(0, 0, 0, 0.35);
    display: flex;
    flex-direction: column;
}
.card-head {
    height: 74px;
    flex: none;
    display: flex;
    align-items: center;
    border-bottom: 2px solid #e2e2e2;
    padding-left: 9px;
}
.card-title {
    margin: 0 31px 0 0;
    width: 138px;
    height: 34px;
    border-right: 1px solid #ddd;
    font-family: "Open Sans", sans-serif;
    font-size: 22px;
    line-height: 32px;
    font-weight: 600;
    letter-spacing: -0.55px;
    color: #0b1b3a;
}
.card-search {
    width: 1218px;
    height: 36px;
    margin-top: 12px;
    border-bottom: 1px solid #8a8a8a;
    display: flex;
    align-items: center;
    justify-content: space-between;
    padding-right: 9px;
}
.cs-text {
    font-size: 17.5px;
    color: #6f6f6f;
}
.cs-icon {
    width: 28px;
    height: 28px;
    margin-top: -6px;
    fill: #6f7780;
}
.card-tools {
    display: flex;
    align-items: center;
    margin-left: 10px;
    margin-top: 1px;
}
.card-tools svg {
    fill: #1f2937;
    flex: none;
}
.tool-refresh {
    width: 30px;
    height: 30px;
}
.tool-funnel {
    width: 30px;
    height: 30px;
    margin-left: 19px;
}
.tool-filter {
    width: 32px;
    height: 32px;
    margin-left: 19px;
}
.tool-rows {
    width: 26px;
    height: 26px;
    margin-left: 32px;
}
.tool-caret {
    margin-left: 11px;
    border-left-width: 6px;
    border-right-width: 6px;
    border-top: 6px solid #1f2937;
}
.fab {
    width: 50px;
    height: 50px;
    margin-left: 59px;
    margin-top: 2px;
    border-radius: 50%;
    background: #01193a;
    box-shadow: 0 3px 6px rgba(0, 0, 0, 0.35);
    display: flex;
    align-items: center;
    justify-content: center;
    flex: none;
}
.fab svg {
    width: 26px;
    height: 26px;
    fill: #fff;
}

.filter-row {
    height: 73px;
    flex: none;
    display: flex;
    padding-left: 25px;
}
.filter-field {
    width: 525px;
    height: 50px;
    border-bottom: 1px solid #8a8a8a;
    padding-top: 24px;
    font-size: 17.5px;
    line-height: 22px;
    color: #77716b;
}
.filter-field:nth-child(2) {
    margin-right: 3px;
}
.filter-actions {
    display: flex;
    gap: 21px;
    margin-left: 15px;
    padding-top: 12px;
}
.filter-actions svg {
    width: 30px;
    height: 30px;
    fill: #9aa8ba;
}

.t-grid {
    display: grid;
    grid-template-columns: 537px 537px 1fr 120px;
    padding: 0 31px 0 30px;
    align-items: center;
}
.t-head {
    height: 70px;
    flex: none;
    background: #f4f4f4;
    border-bottom: 1px solid #e2e2e2;
    box-shadow: 0 1px 2px rgba(0, 0, 0, 0.12);
    font-size: 15px;
    font-weight: 800;
    color: #0b1b3a;
}
.t-row {
    height: 61.25px;
    flex: none;
    border-bottom: 2px solid #e6e6e6;
    font-size: 17.5px;
    color: #222;
}
.t-name {
    padding-left: 5px;
}
.t-action {
    text-align: right;
}
.t-more {
    display: block;
    margin-left: auto;
    margin-right: 12px;
    width: 26px;
    height: 26px;
    fill: #3a4250;
}
.card-foot {
    flex: 1;
    min-height: 0;
    background: #f2f6fd;
    display: flex;
    justify-content: flex-end;
}
.pager {
    width: 565px;
    background: #f4f4f4;
    display: flex;
    align-items: center;
    padding-left: 15px;
    font-size: 15px;
    color: #7a7a7a;
}
.pg-select {
    width: 70px;
    height: 32px;
    margin-left: 11px;
    margin-top: 3px;
    border-bottom: 1px solid #8a8a8a;
    display: flex;
    align-items: center;
    justify-content: space-between;
    padding-right: 5px;
    color: #222;
}
.pg-caret {
    border-top-color: #666;
}
.pg-range {
    margin-left: 44px;
    margin-top: -4px;
}
.pg-btns {
    display: flex;
    gap: 16px;
    margin-left: 49px;
}
.pg-btns svg {
    width: 34px;
    height: 34px;
    fill: #8fa0b5;
}

/* windows taskbar */
.taskbar {
    height: 60px;
    flex: none;
    display: flex;
    align-items: center;
    padding-left: 613px;
    border-top: 1px solid #bcc2cc;
    background: linear-gradient(90deg, #d5dbe6 0%, #e6dfe2 25%, #f5e2d3 50%, #f1e6d8 62%, #d6dfe8 75%, #d2dce8 100%);
    font-family: "Noto Sans", sans-serif;
    color: #222;
}
.tk-win {
    width: 30px;
    height: 30px;
    flex: none;
}
.tk-search {
    width: 274px;
    height: 39px;
    margin-left: 16px;
    margin-right: 16px;
    border-radius: 20px;
    background: #fbf5f1;
    border: 1px solid #dbcfc8;
    display: flex;
    align-items: center;
    padding-left: 13px;
    font-size: 16px;
    color: #555;
}
.tk-search svg {
    width: 22px;
    height: 22px;
    fill: none;
    stroke: #222;
    stroke-width: 2;
    margin-right: 10px;
}
.tk-app {
    width: 30px;
    height: 30px;
    flex: none;
    margin-right: 25px;
}
.tk-chrome {
    width: 47px;
    height: 48px;
    margin-left: -9px;
    border-radius: 6px;
    background: #f5efe7;
    box-shadow: 2px 0 0 #ece6de;
    display: flex;
    align-items: center;
    justify-content: center;
    position: relative;
}
.tk-chrome svg {
    width: 30px;
    height: 30px;
}
.tk-badge {
    position: absolute;
    top: 3px;
    right: 2px;
    width: 20px;
    height: 20px;
    border-radius: 50%;
    background: #00897b;
    color: #fff;
    font-size: 10px;
    display: flex;
    align-items: center;
    justify-content: center;
}
.tk-active {
    position: absolute;
    bottom: 0;
    left: 14px;
    width: 20px;
    height: 4px;
    border-radius: 2px;
    background: #0a78d8;
}
.tk-excel {
    width: 27px;
    height: 48px;
    margin-left: 17px;
    padding-top: 9px;
    position: relative;
}
.tk-excel svg {
    width: 27px;
    height: 30px;
    display: block;
}
.xl {
    font: 700 9px "Liberation Sans", sans-serif;
    fill: #fff;
    text-anchor: middle;
}
.tk-open {
    position: absolute;
    bottom: 0;
    left: 10px;
    width: 7px;
    height: 3px;
    border-radius: 2px;
    background: #777;
}
.tray {
    margin-left: auto;
    padding-right: 24px;
    display: flex;
    align-items: center;
    font-size: 14.5px;
    line-height: 20px;
}
.tray-up {
    width: 14px;
    height: 8px;
    fill: none;
    stroke: #222;
    stroke-width: 1.8;
}
.tray-lang {
    margin-left: 26px;
    text-align: center;
    width: 30px;
}
.tray-icon {
    width: 20px;
    height: 18px;
    margin-left: 22px;
    fill: #222;
}
.tray-icon + .tray-icon {
    margin-left: 10px;
}
.tray-line {
    fill: none;
    stroke: #222;
    stroke-width: 1.3;
}
.tray-batt {
    width: 26px;
    height: 14px;
    margin-left: 10px;
    fill: #222;
}
.tray-clock {
    margin-left: 11px;
    text-align: right;
    width: 86px;
}
```
